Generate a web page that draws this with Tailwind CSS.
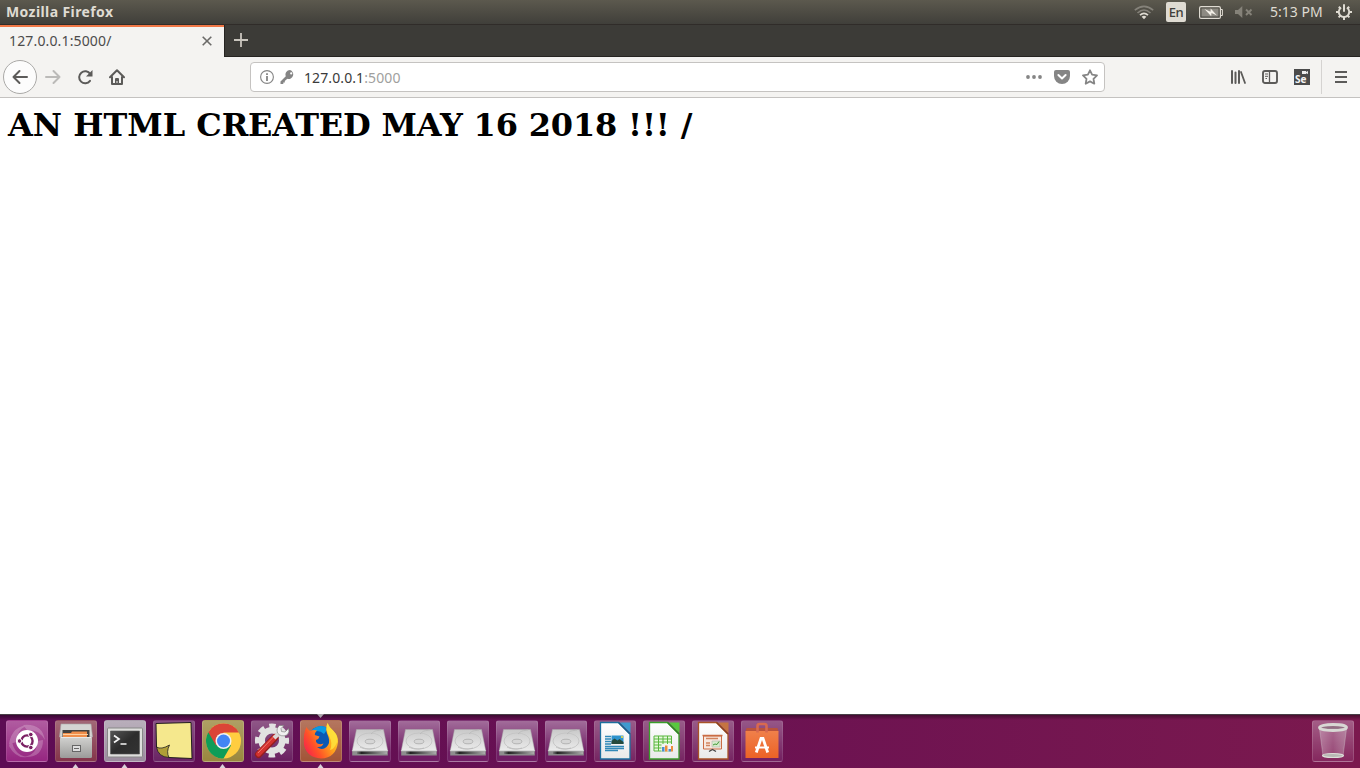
<!DOCTYPE html>
<html lang="en">
<head>
<meta charset="utf-8">
<title>127.0.0.1:5000/</title>
<script src="https://cdn.jsdelivr.net/npm/@tailwindcss/browser@4"></script>
</head>
<body class="w-[1360px] h-[768px] overflow-hidden flex flex-col bg-white font-['Noto_Sans',sans-serif] whitespace-nowrap">

<!-- Definitions shared by the dock icons -->
<svg class="absolute w-0 h-0" aria-hidden="true">
  <defs>
    <linearGradient id="disk" x1="0" y1="0" x2="0" y2="1"><stop offset="0" stop-color="#c9c9c9"/><stop offset="1" stop-color="#ececec"/></linearGradient>
    <linearGradient id="edge"><stop offset="0" stop-color="#777"/><stop offset=".15" stop-color="#222"/><stop offset="1" stop-color="#aaa"/></linearGradient>
    <linearGradient id="paper" x1="0" y1="0" x2="0" y2="1"><stop offset="0" stop-color="#fff"/><stop offset="1" stop-color="#e9e9e9"/></linearGradient>
    <linearGradient id="cab" x1="0" y1="0" x2="0" y2="1"><stop offset="0" stop-color="#d2d2d0"/><stop offset="1" stop-color="#9b9b99"/></linearGradient>
    <linearGradient id="term" x1="0" y1="0" x2="1" y2="1"><stop offset="0" stop-color="#555"/><stop offset=".5" stop-color="#2d2d2d"/><stop offset="1" stop-color="#333"/></linearGradient>
    <linearGradient id="flame" x1="1" y1=".2" x2="0" y2=".8"><stop offset="0" stop-color="#ffe83a"/><stop offset=".35" stop-color="#ffa51c"/><stop offset=".7" stop-color="#ff5228"/><stop offset="1" stop-color="#f5204e"/></linearGradient>
    <linearGradient id="bag" x1="0" y1="0" x2="0" y2="1"><stop offset="0" stop-color="#f0804a"/><stop offset="1" stop-color="#ec6226"/></linearGradient>
    <linearGradient id="glass"><stop offset="0" stop-color="#fff" stop-opacity=".3"/><stop offset=".5" stop-color="#fff" stop-opacity=".12"/><stop offset="1" stop-color="#ddd" stop-opacity=".35"/></linearGradient>
    <symbol id="drive" viewBox="0 0 42 42">
      <path d="M7.500 9.500h27l4.300 21.500H3.200z" fill="url(#disk)" stroke="#aaa" stroke-width=".5"/>
      <ellipse cx="21" cy="21" rx="13" ry="8" fill="none" stroke="#c4c4c4" stroke-width=".9"/>
      <path d="M22 14c4-4 5-3 10-4M11 27c4 2 8 3 15 1" fill="none" stroke="#b8b8b8" stroke-width=".8"/>
      <ellipse cx="21" cy="21.500" rx="4.800" ry="2.300" fill="#d6d6d6" stroke="#aaa" stroke-width=".8"/>
      <path d="M3.200 30.500h35.600v5H3.200z" fill="#8e8e8e"/><path d="M8 31.500h30v2.600H8z" fill="url(#edge)"/>
      <path d="M3.200 30.700h35.600" stroke="#f4f4f4" stroke-width=".7"/>
    </symbol>
  </defs>
</svg>

<!-- System panel -->
<header class="h-6 shrink-0 flex items-center bg-linear-to-b from-[#5c594e] to-[#403f3a] text-[#dfdbd2] text-[14px] leading-6">
  <div class="pl-[6px] text-[14px] font-bold tracking-[0.4px]">Mozilla Firefox</div>
  <div class="ml-auto flex items-center h-6">
    <svg class="w-5 h-[15px] mt-[1px]" viewBox="0 0 20 15" fill="none">
      <path d="M.8 5.200Q10-2.500 19.200 5.200M3.500 8Q10 2 16.500 8" stroke="#85827a" stroke-width="1.600"/>
      <path d="M6 10.200Q10 6.500 14 10.200" stroke="#dfdbd2" stroke-width="1.700"/><path d="M7.600 11.800Q10 9.800 12.400 11.800L10 14.200z" fill="#dfdbd2"/>
    </svg>
    <div class="ml-3 w-5 h-5 rounded-[2px] bg-[#dfdbd2] text-[#3f3e39] text-[13px] font-medium leading-[21px] text-center tracking-[-0.5px]">En</div>
    <svg class="ml-[13px] w-6 h-[13px]" viewBox="0 0 24 13"><rect x=".6" y=".6" width="20.800" height="11.800" rx="1.500" fill="none" stroke="#dfdbd2" stroke-width="1.200"/><path d="M22 3.500h1.400v6H22" fill="none" stroke="#dfdbd2"/><path d="M2.500 2.500h17v8h-17z" fill="#8d8a82"/><path d="M5.500 3l6 2.700.2-3.200 6.300 7-5.500-2.500-.3 3.200z" fill="#f2eee6"/></svg>
    <svg class="ml-3 w-[18px] h-3 text-[#858279]" viewBox="0 0 18 12"><path d="M0 4h3l4.300-4v12L3 8H0z" fill="currentColor"/><path d="M11 3.500l5.500 5.500M16.500 3.500L11 9" stroke="currentColor" stroke-width="1.900"/></svg>
    <div class="ml-[17px] w-[54px] text-[14px]">5:13 PM</div>
    <svg class="ml-[12px] mr-[8px] w-4 h-4" viewBox="0 0 16 16" fill="none" stroke="#dfdbd2"><path d="M5 3.600A5.200 5.200 0 1 0 11 3.600" stroke-width="1.900"/><path d="M8 .3v7.500" stroke-width="2"/><path d="M2.800 2.800l1.800 1.800M13.200 2.800l-1.800 1.800M0 8h3M16 8h-3M2.600 13.400l1.800-1.800M13.400 13.400l-1.800-1.800M8 13v3" stroke-width="2"/></svg>
  </div>
</header>

<!-- Tab strip -->
<div class="h-[33px] shrink-0 flex bg-[#3c3b37] border-t border-[#302c29]">
  <div class="w-[224px] h-[32px] border-t-2 border-[#f07746] bg-[#f4f3f1] flex items-center justify-between pl-[9px] pr-[12px]">
    <span class="-mt-[2px] text-[14px] leading-[28px] tracking-[0.15px] text-[#4c4c4c]">127.0.0.1:5000/</span>
    <svg class="-mt-[2px] w-[10px] h-[10px]" viewBox="0 0 10 10"><path d="M.7.7l8.600 8.600M9.300.7L.7 9.300" stroke="#6b6a68" stroke-width="1.600"/></svg>
  </div>
  <div class="flex-1 h-[32px] border-l border-b border-[#262421] flex items-center pl-[9px]">
    <svg class="w-[14px] h-[14px] -mt-px" viewBox="0 0 14 14"><path d="M7 0v14M0 7h14" stroke="#c9c5bd" stroke-width="1.800"/></svg>
  </div>
</div>

<!-- Navigation toolbar -->
<nav class="h-[41px] shrink-0 flex items-center bg-[#f4f3f1] border-b border-[#c4c2c0] text-[#5c5b59]">
  <div class="ml-[3px] w-[34px] h-[34px] rounded-full border border-[#aaa9a7] bg-[#fcfcfc] flex items-center justify-center">
    <svg class="w-4 h-4" viewBox="0 0 16 16" fill="none" stroke="currentColor" stroke-width="2" stroke-linecap="round" stroke-linejoin="round"><path d="M15 8H1.500M7.500 2L1.500 8l6 6"/></svg>
  </div>
  <svg class="ml-2 w-4 h-4 text-[#bbbab8]" viewBox="0 0 16 16" fill="none" stroke="currentColor" stroke-width="2" stroke-linecap="round" stroke-linejoin="round"><path d="M1 8h13.500M8.500 2l6 6-6 6"/></svg>
  <svg class="ml-4 w-4 h-4" viewBox="0 0 16 16"><path d="M13.200 5A6 6 0 1 0 13 11.800" fill="none" stroke="currentColor" stroke-width="2" stroke-linecap="round"/><path d="M15.500 1v6.500H9z" fill="currentColor"/></svg>
  <svg class="ml-4 w-4 h-4" viewBox="0 0 16 16"><path d="M1 8.200L8 1.200l7 7M3 8v7h10V8" fill="none" stroke="currentColor" stroke-width="2" stroke-linecap="round" stroke-linejoin="round"/><path d="M6 15v-5q0-1 1-1h2q1 0 1 1v5H8.500v-3h-1v3z" fill="currentColor"/></svg>

  <div class="ml-[125px] w-[855px] h-[30px] rounded-[4px] border border-[#c5c3c1] bg-white flex items-center pl-[9px] pr-[6px]">
    <svg class="w-[14px] h-[14px] text-[#858585]" viewBox="0 0 14 14"><circle cx="7" cy="7" r="6.400" fill="none" stroke="currentColor" stroke-width="1.100"/><path d="M6.100 6h1.800v5H6.100zM6.100 3.200h1.800v1.700H6.100z" fill="currentColor"/></svg>
    <svg class="ml-[6px] w-[15px] h-[14px] text-[#858585]" viewBox="0 0 14 14"><path fill="currentColor" fill-rule="evenodd" d="M9.500 0A4.500 4.500 0 0 0 5.300 6.200L0 11.500V14h2.800v-1.500h1.500V11l2.500-2.300A4.500 4.500 0 1 0 9.500 0zM10.700 2.300a1.100 1.100 0 1 1 0 2.200 1.100 1.100 0 0 1 0-2.200z"/></svg>
    <div class="ml-[9px] mt-[2px] text-[14px] leading-[26px] tracking-[0.1px] text-[#3a3a3a]">127.0.0.1<span class="text-[#a09f9e]">:5000</span></div>
    <svg class="ml-auto w-4 h-4 text-[#858585]" viewBox="0 0 16 16" fill="currentColor"><circle cx="2" cy="8" r="1.900"/><circle cx="8" cy="8" r="1.900"/><circle cx="14" cy="8" r="1.900"/></svg>
    <svg class="ml-3 w-4 h-4 text-[#858585]" viewBox="0 0 16 16"><path fill="currentColor" d="M2 1h12q2 0 2 2v4a8 8 0 0 1-16 0V3q0-2 2-2z"/><path d="M4.400 6L8 9.400 11.600 6" fill="none" stroke="#fff" stroke-width="2" stroke-linecap="round" stroke-linejoin="round"/></svg>
    <svg class="ml-3 w-4 h-4 text-[#858585]" viewBox="0 0 16 16"><path fill="none" stroke="currentColor" stroke-width="1.800" stroke-linejoin="round" d="M8 1.300l2.100 4.400 4.900.7-3.500 3.400.8 4.900L8 12.400l-4.300 2.300.8-4.900L1 6.400l4.900-.7z"/></svg>
  </div>

  <svg class="ml-[125px] w-4 h-4" viewBox="0 0 16 16" stroke="currentColor" stroke-width="2" stroke-linecap="round"><path d="M2 2v12M5.500 3.500V14M9 2v12"/><path d="M11 3l4 11" stroke-width="1.800"/></svg>
  <svg class="ml-4 w-4 h-4" viewBox="0 0 16 16"><rect x="1" y="2" width="14" height="12" rx="2" fill="none" stroke="currentColor" stroke-width="1.900"/><path d="M7.500 2v12" stroke="currentColor" stroke-width="1.300"/><path d="M3 5h3M3 7.300h3M3.500 9.500H5" stroke="currentColor"/></svg>
  <svg class="ml-4 w-4 h-4" viewBox="0 0 16 16"><path fill="#4b4b4b" d="M0 0h16v16H0z"/><path fill="#eee" d="M8 2h4v1l2-1v3l-2-.7V5H8z"/><text x="1" y="14" font-family="Noto Sans" font-size="10" font-weight="700" fill="#f4f4f4">Se</text></svg>
  <div class="ml-[11px] w-px h-[34px] bg-[#d5d3d1]"></div>
  <svg class="ml-[13px] w-[12px] h-[12px]" viewBox="0 0 12 12"><path d="M0 1h12M0 6h12M0 11h12" stroke="currentColor" stroke-width="1.800"/></svg>
</nav>

<!-- Page -->
<main class="flex-1 pl-2 pt-2">
  <h1 class="font-['DejaVu_Serif',serif] font-bold text-[32px] leading-[38px] text-black">AN HTML <span class="tracking-[-0.17px]">CREATED MAY 16 2018 !!! /</span></h1>
</main>

<!-- Dock -->
<footer class="relative h-[54px] shrink-0 flex items-start gap-[7px] pl-[6px] pr-[6px] pt-[5px] border-t border-[#484047] bg-linear-to-r from-[#5d0c54] via-[#6a1152] to-[#7b194e]">
  <div class="absolute inset-x-0 top-0 h-[5px] bg-linear-to-b from-black/40 to-transparent"></div>

  <div class="w-[42px] h-[42px] rounded-[3px] bg-[#962681] border border-white/10 bg-linear-to-b from-white/25 to-transparent"><svg class="-m-px w-[42px] h-[42px]" viewBox="0 0 42 42"><path d="M3 24Q6 5 24 5Q10 8 11 22zM37 20Q37 38 18 37Q32 34 31 21zM17 5Q36 3 39 20Q33 9 21 10zM6 15Q5 34 21 37Q10 39 3 26z" fill="#fff" opacity=".22"/><circle cx="21" cy="21" r="11" fill="#fff"/><circle cx="21" cy="21" r="5.600" fill="none" stroke="#7b2164" stroke-width="2.400"/><path d="M21 21L11 21M21 21L26 12.500M21 21L26 29.500" stroke="#fff" stroke-width="1.400"/><circle cx="21" cy="21" r="4" fill="#fff"/><g fill="#7b2164" stroke="#fff"><circle cx="13.500" cy="21" r="2.300"/><circle cx="24.800" cy="14.500" r="2.300"/><circle cx="24.800" cy="27.500" r="2.300"/></g></svg></div>

  <div class="w-[42px] h-[42px] rounded-[3px] bg-[#84354a] border border-white/10 bg-linear-to-b from-white/25 to-transparent"><svg class="-m-px w-[42px] h-[42px]" viewBox="0 0 42 42"><path d="M6 4h30l1.500 13h-33z" fill="#d4d4d2" stroke="#aaa" stroke-width=".6"/><path d="M7.500 10h27v8h-27z" fill="#43413f"/><path d="M8 17v-4h8l1-1.500h15V17z" fill="#f08e4b"/><path d="M8 14.500h25" stroke="#ffd0a0"/><rect x="5" y="17" width="32" height="21" rx="1.500" fill="url(#cab)"/><path d="M5.500 17.500h31" stroke="#e9e9e9"/><rect x="17.500" y="25.500" width="8" height="6" fill="#dedede" stroke="#666"/><path d="M19 28.500h5" stroke="#666"/></svg></div>

  <div class="w-[42px] h-[42px] rounded-[3px] bg-[#9b8c9e] border border-white/15 bg-linear-to-b from-white/30 to-transparent"><svg class="-m-px w-[42px] h-[42px]" viewBox="0 0 42 42"><rect x="3.500" y="8" width="35" height="29" rx="1" fill="#dededc" stroke="#888"/><path d="M6.500 11h29v23h-29z" fill="url(#term)" stroke="#555" stroke-width=".6"/><path d="M10 15.500l5 3.500-5 3.500M16.500 24h6" fill="none" stroke="#f6f6f6" stroke-width="1.700"/></svg></div>

  <div class="w-[42px] h-[42px] rounded-[3px] bg-[#6a2464] border border-white/10 bg-linear-to-b from-white/20 to-transparent"><svg class="-m-px w-[42px] h-[42px]" viewBox="0 0 42 42"><path d="M3 3.500l35-1 1 36-23-1L3.500 27z" fill="#f5e88d" stroke="#111" stroke-width=".9"/><path d="M3.500 27Q8 30 16.500 25Q13 32 16 37.500Q5 37 3.500 27z" fill="#b09e37" stroke="#222" stroke-width=".8"/></svg></div>

  <div class="w-[42px] h-[42px] rounded-[3px] bg-[#9a873e] border border-white/15 bg-linear-to-b from-white/20 to-transparent"><svg class="-m-px w-[42px] h-[42px]" viewBox="0 0 42 42"><circle cx="21.500" cy="21" r="17.500" fill="#ffcd40"/><path d="M21.500 21L6.300 12.300A17.500 17.500 0 0 0 21.500 38.500L29 25.500z" fill="#0f9d58"/><path d="M21.500 21L14 25.500 6.300 12.300A17.500 17.500 0 0 1 36.800 12.500H21.500z" fill="#db4437"/><circle cx="21.500" cy="21" r="8" fill="#f1f1f1"/><circle cx="21.500" cy="21" r="6.500" fill="#4285f4"/></svg></div>

  <div class="w-[42px] h-[42px] rounded-[3px] bg-[#6a2060] border border-white/10 bg-linear-to-b from-white/25 to-transparent"><svg class="-m-px w-[42px] h-[42px]" viewBox="0 0 42 42"><circle cx="21" cy="20.500" r="14.800" fill="none" stroke="#e2e2e2" stroke-width="4.500" stroke-dasharray="6.400 5.223" stroke-dashoffset="3.200"/><circle cx="21" cy="20.500" r="10.300" fill="none" stroke="#e2e2e2" stroke-width="6.500"/><path d="M7.500 34.500L24 17.500" stroke="#931e1e" stroke-width="7" stroke-linecap="round"/><path d="M7.500 34L24 17" stroke="#d3322f" stroke-width="5" stroke-linecap="round"/><path d="M7 33L22.500 17" stroke="#ef7971"/><path d="M23 18l6-5.500" stroke="#d8d8d8" stroke-width="4"/><path d="M28.500 5.500Q25 8 26.500 13Q30 17.500 36 15Q39 12 37.500 8.500L34 12l-3.500-.5L30 8.500l3-3z" fill="#f0f0f0" stroke="#777" stroke-width=".6"/></svg></div>

  <div class="w-[42px] h-[42px] rounded-[3px] bg-[#a25437] border border-white/15 bg-linear-to-b from-white/20 to-transparent"><svg class="-m-px w-[42px] h-[42px]" viewBox="0 0 42 42"><circle cx="21" cy="18.500" r="12.300" fill="#0a58b4"/><path d="M12 10Q20 3 28 8.500L24 14Q19 9 12 12z" fill="#0a9ae4"/><path d="M6.500 7Q7.500 9.500 10 11Q13.500 9.500 17 10.500Q14.800 12.500 14.800 15L19.500 16.500Q19 19 16 20Q15.500 23 19 24Q21 24.500 23.500 23.500Q22 27.500 17 27Q22 31 26.500 27Q30.500 23 28.500 17Q24.500 9 27.500 3Q29 7.500 33.500 11Q38.500 16 38 22Q36 38 21 38.500Q7 37.500 4 25Q3 13 6.500 7z" fill="url(#flame)"/><path d="M27.500 3Q29 7.500 33.500 11Q38 16 37 22Q34.500 29 30 30Q33 23 29.500 17Q25 9 27.500 3z" fill="#ffe23c" opacity=".85"/></svg></div>

  <div class="w-[42px] h-[42px] rounded-[3px] bg-[#701e64] border border-white/10 bg-linear-to-b from-white/35 to-transparent to-80%"><svg class="-m-px w-[42px] h-[42px]"><use href="#drive"/></svg></div>
  <div class="w-[42px] h-[42px] rounded-[3px] bg-[#701e64] border border-white/10 bg-linear-to-b from-white/35 to-transparent to-80%"><svg class="-m-px w-[42px] h-[42px]"><use href="#drive"/></svg></div>
  <div class="w-[42px] h-[42px] rounded-[3px] bg-[#701e64] border border-white/10 bg-linear-to-b from-white/35 to-transparent to-80%"><svg class="-m-px w-[42px] h-[42px]"><use href="#drive"/></svg></div>
  <div class="w-[42px] h-[42px] rounded-[3px] bg-[#701e64] border border-white/10 bg-linear-to-b from-white/35 to-transparent to-80%"><svg class="-m-px w-[42px] h-[42px]"><use href="#drive"/></svg></div>
  <div class="w-[42px] h-[42px] rounded-[3px] bg-[#701e64] border border-white/10 bg-linear-to-b from-white/35 to-transparent to-80%"><svg class="-m-px w-[42px] h-[42px]"><use href="#drive"/></svg></div>

  <div class="w-[42px] h-[42px] rounded-[3px] bg-[#762562] border border-white/10 bg-linear-to-b from-white/25 to-transparent"><svg class="-m-px w-[42px] h-[42px]" viewBox="0 0 42 42"><path d="M6.500 2.500h18L36 14v25H6.500z" fill="url(#paper)" stroke="#1c6f9e" stroke-width="1.300"/><path d="M26 2.500h10.500v10.500z" fill="#3d9bcf"/><path d="M24.500 2.500L36 14" stroke="#17618b" stroke-width="1.500"/><path d="M11 16.500h6M11 19h6M11 21.500h6M11 24h6M11 26.500h19M11 28.500h19M11 30.500h13" stroke="#3189b8" stroke-width="1.300"/><path d="M17.500 15.500h12v8.500h-12z" fill="#2e93cd"/><path d="M17.500 24v-3l3-2.500 3 2 2-1.500 4 3V24z" fill="#254a3c"/><circle cx="28" cy="17" r="1.100" fill="#f5dd3b"/></svg></div>
  <div class="w-[42px] h-[42px] rounded-[3px] bg-[#762562] border border-white/10 bg-linear-to-b from-white/25 to-transparent"><svg class="-m-px w-[42px] h-[42px]" viewBox="0 0 42 42"><path d="M6.500 2.500h18L36 14v25H6.500z" fill="url(#paper)" stroke="#3a9e2b" stroke-width="1.300"/><path d="M26 2.500h10.500v10.500z" fill="#58c83f"/><path d="M24.500 2.500L36 14" stroke="#2f8920" stroke-width="1.500"/><path d="M11 16h17.500v15H11zM11 19h17.500M11 22h17.500M11 25h17.500M11 28h17.500M15.500 16v15M20 16v15M24.500 16v15" fill="#e8f8dd" stroke="#59b73e"/><path d="M18.500 24H30v7.500H18.500z" fill="#f4f4f4"/><path d="M19 27h2.500v4.500H19zM25.500 29H28v2.500h-2.500z" fill="#4c8ed0"/><path d="M22 25.500h2.500v6H22zM28 26h2v5.500h-2z" fill="#ed8d3b"/></svg></div>
  <div class="w-[42px] h-[42px] rounded-[3px] bg-[#762562] border border-white/10 bg-linear-to-b from-white/25 to-transparent"><svg class="-m-px w-[42px] h-[42px]" viewBox="0 0 42 42"><path d="M6.500 2.500h18L36 14v25H6.500z" fill="url(#paper)" stroke="#a85327" stroke-width="1.300"/><path d="M26 2.500h10.500v10.500z" fill="#c57441"/><path d="M24.500 2.500L36 14" stroke="#8e421c" stroke-width="1.500"/><path d="M11.500 16h18v13h-18z" fill="#f8e8df" stroke="#ca6c44"/><path d="M10.500 15.500h20" stroke="#ca6c44" stroke-width="1.500"/><path d="M14 18.500h12M14 23h4M14 25.500h4" stroke="#d1845f" stroke-width="1.500"/><path d="M20 21h8v6h-8z" fill="#d6edcc" stroke="#aaa" stroke-width=".5"/><path d="M21 25l2-1 2 .5 2-3" fill="none" stroke="#439739"/><path d="M17 31.500l3.500-2 3.500 2" fill="none" stroke="#444" stroke-width="1.300"/></svg></div>
  <div class="w-[42px] h-[42px] rounded-[3px] bg-[#732060] border border-white/10 bg-linear-to-b from-white/25 to-transparent"><svg class="-m-px w-[42px] h-[42px]" viewBox="0 0 42 42"><path d="M5.500 8h31l1 4h-33z" fill="#b9523b"/><path d="M4.500 11h33v27h-33z" fill="url(#bag)"/><path d="M16.500 12.500V6q0-2 2-2h5q2 0 2 2v6.500" fill="none" stroke="#d8694f" stroke-width="2.600"/><path d="M15.300 32.500L20 18.500h2l4.700 14" fill="none" stroke="#fff" stroke-width="2.800"/><path d="M14 27.500h14" stroke="#fff" stroke-width="2"/></svg></div>

  <div class="ml-auto w-[42px] h-[42px] rounded-[3px] bg-[#85285e] border border-white/15 bg-linear-to-b from-white/25 to-transparent"><svg class="-m-px w-[42px] h-[42px]" viewBox="0 0 42 42"><path d="M7.500 9h27L31 36H11z" fill="url(#glass)" stroke="#ddd" stroke-opacity=".3"/><ellipse cx="21" cy="7.500" rx="13.500" ry="3" fill="#888" fill-opacity=".5" stroke="#d8d8d4" stroke-width="2.800"/><ellipse cx="21" cy="35.500" rx="10.500" ry="2" fill="#b8b8b4" stroke="#deded9" stroke-width="1.200"/></svg></div>

  <!-- Running-window pips -->
  <div class="absolute left-0 bottom-0"><svg class="w-[340px] h-[4px] block" viewBox="0 0 340 4" fill="#d9d2d9"><path d="M72.500 4l3-4 3 4zM121.500 4l3-4 3 4zM219.500 4l3-4 3 4zM317.500 4l3-4 3 4z"/></svg></div>
  <svg class="absolute left-[317px] -top-px w-[7px] h-[4px]" viewBox="0 0 7 4"><path d="M0 0h7L3.500 4z" fill="#aaa5aa"/></svg>
</footer>
</body>
</html>
